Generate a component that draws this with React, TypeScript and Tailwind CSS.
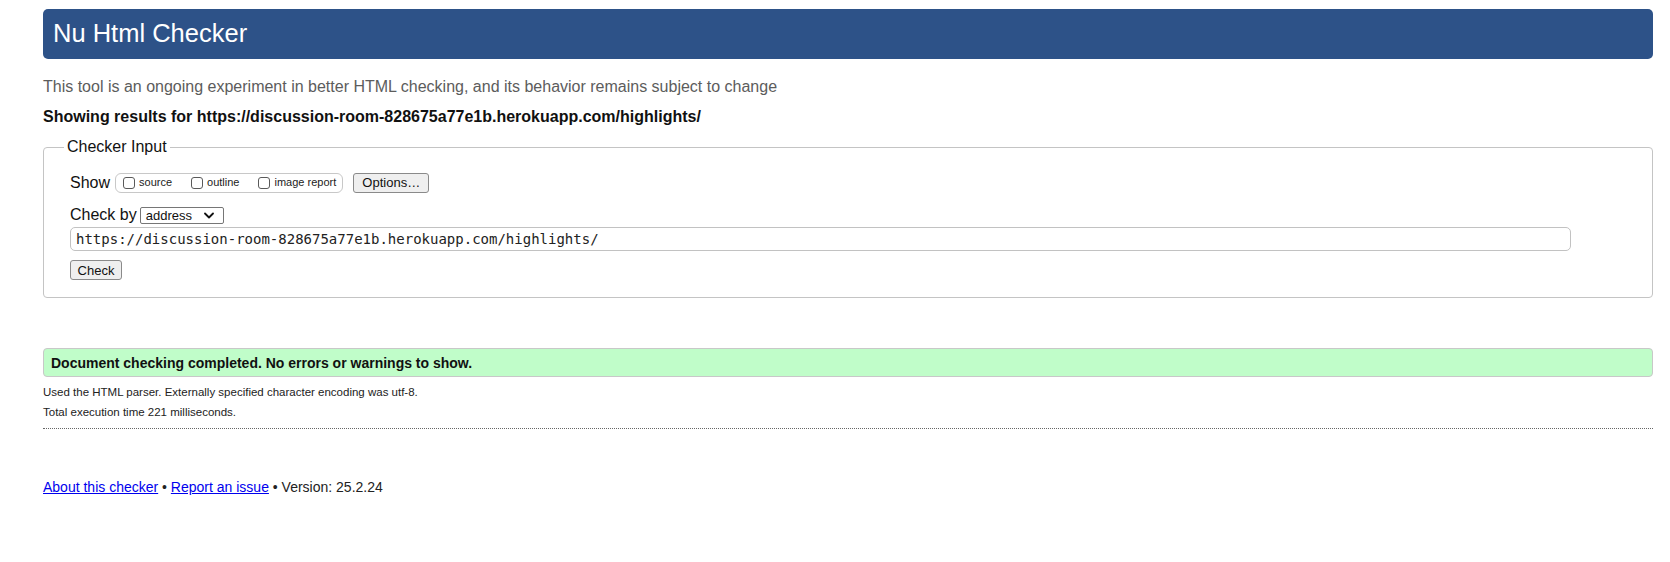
import React from "react";

const Checkbox = ({ label }: { label: string }) => (
  <label className="flex items-center">
    <input
      type="checkbox"
      className="appearance-none w-[12px] h-[12px] border border-[#5a5a5a] rounded-[3px] bg-white"
    />
    <span className="ml-[4px] text-[11px] text-[#222]">{label}</span>
  </label>
);

const Button = ({ children, className = "" }: { children: React.ReactNode; className?: string }) => (
  <button
    className={`border border-[#8a8a8a] rounded-[3px] bg-[#efefef] text-[13px] leading-none text-[#111] ${className}`}
  >
    {children}
  </button>
);

const App = () => {
  return (
    <div className="min-h-[562px] bg-white pl-[43px] pr-[17px] pt-[9px] font-['Liberation_Sans',Arial,sans-serif] text-[#222]">
      {/* Title bar */}
      <h1 className="h-[50px] flex items-center px-[10px] rounded-[5px] bg-[#2d5288] text-white text-[25.5px] leading-none">
        Nu Html Checker
      </h1>

      <p className="mt-[19px] text-[16px] leading-[18px] text-[#5c5c5c]">
        This tool is an ongoing experiment in better HTML checking, and its behavior remains subject to change
      </p>
      <p className="mt-[12px] text-[16px] leading-[18px] font-bold text-[#111]">
        Showing results for https://discussion-room-828675a77e1b.herokuapp.com/highlights/
      </p>

      {/* Checker input */}
      <fieldset className="mt-[12px] border border-[#c4c4c4] rounded-[4px] pl-[26px] pr-[10px] pt-[16px] pb-[17px]">
        <legend className="ml-[-6px] px-[3px] text-[16px] leading-[18px] text-[#111]">Checker Input</legend>

        <div className="flex items-center h-[21px]">
          <span className="text-[16px] leading-[18px] text-[#111]">Show</span>
          <div className="ml-[5px] flex items-center h-[20px] pl-[7px] pr-[6px] gap-[19px] border border-[#c8c8c8] rounded-[6px]">
            <Checkbox label="source" />
            <Checkbox label="outline" />
            <Checkbox label="image report" />
          </div>
          <Button className="ml-[10px] h-[20px] w-[76px]">Options…</Button>
        </div>

        <div className="mt-[13px] flex items-center h-[18px]">
          <span className="text-[16px] leading-[18px] text-[#111]">Check by</span>
          <div className="ml-[3px] flex items-center justify-between h-[17px] w-[84px] pl-[5px] pr-[9px] border border-[#767676] rounded-[2px] bg-white">
            <span className="text-[13px] leading-none text-[#111]">address</span>
            <svg width="10" height="7" viewBox="0 0 10 7" fill="none">
              <path d="M1 1.5 L5 5.5 L9 1.5" stroke="#111" strokeWidth="1.8" strokeLinecap="round" strokeLinejoin="round" />
            </svg>
          </div>
        </div>

        <div className="mt-[3px] w-[1501px] h-[24px] flex items-center px-[5px] border border-[#c2c2c2] rounded-[5px] font-['DejaVu_Sans_Mono',monospace] text-[14px] text-[#222]">
          https://discussion-room-828675a77e1b.herokuapp.com/highlights/
        </div>

        <Button className="mt-[9px] h-[20px] w-[52px] block">Check</Button>
      </fieldset>

      {/* Result */}
      <div className="mt-[50px] h-[29px] flex items-center pl-[7px] border border-[#c8c8c8] rounded-[4px] bg-[#c0fdc9]">
        <strong className="text-[14px] leading-none text-[#111]">
          Document checking completed. No errors or warnings to show.
        </strong>
      </div>
      <p className="mt-[5px] text-[11.5px] leading-[20px] text-[#222]">
        Used the HTML parser. Externally specified character encoding was utf-8.
      </p>
      <p className="text-[11.5px] leading-[20px] text-[#222]">Total execution time 221 milliseconds.</p>
      <div className="mt-[6px] border-b border-dotted border-[#666]" />

      {/* Footer */}
      <p className="mt-[50px] text-[14px] leading-[17px] text-[#222]">
        <a href="#" className="text-[#0000ee] underline">About this checker</a>
        {" • "}
        <a href="#" className="text-[#0000ee] underline">Report an issue</a>
        {" • Version: 25.2.24"}
      </p>
    </div>
  );
};

export default App;
